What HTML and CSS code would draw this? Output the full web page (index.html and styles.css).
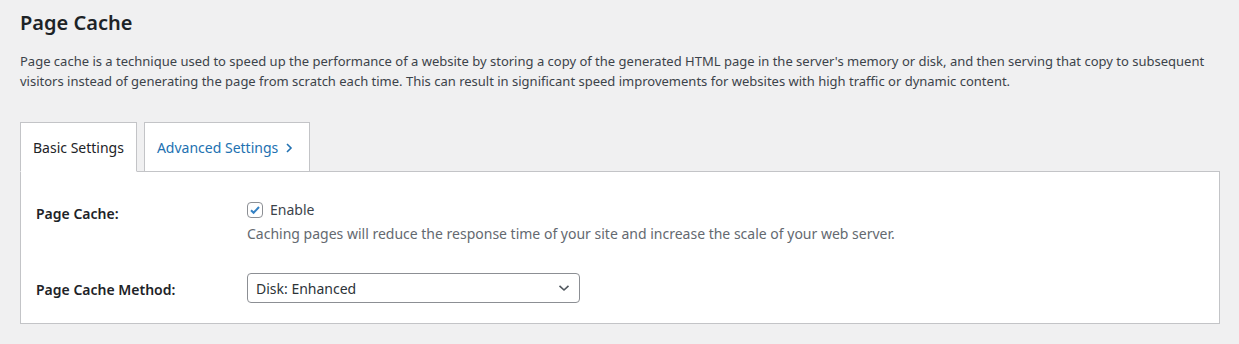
FILE: index.html
```html
<!DOCTYPE html>
<html lang="en">
<head>
  <meta charset="UTF-8">
  <title>Page Cache</title>
  <link rel="stylesheet" href="styles.css">
</head>
<body>
  <div class="wrap">
    <h1>Page Cache</h1>
    <p class="intro">Page cache is a technique used to speed up the performance of a website by storing a copy of the generated HTML page in the server's memory or disk, and then serving that copy to subsequent visitors instead of generating the page from scratch each time. This can result in significant speed improvements for websites with high traffic or dynamic content.</p>

    <div class="tabs">
      <a class="tab active" href="#">Basic Settings</a>
      <a class="tab" href="#">Advanced Settings
        <svg class="chev" width="8" height="12" viewBox="0 0 8 12"><path d="M2 2l4 4-4 4" fill="none" stroke="currentColor" stroke-width="1.6"/></svg>
      </a>
    </div>

    <div class="card">
      <div class="row">
        <div class="label">Page Cache:</div>
        <div class="field">
          <label class="check">
            <span class="box">
              <svg width="14" height="14" viewBox="0 0 14 14"><path d="M3 7.2l2.6 2.6L11 4" fill="none" stroke="#3582c4" stroke-width="2"/></svg>
            </span>
            Enable
          </label>
          <p class="desc">Caching pages will reduce the response time of your site and increase the scale of your web server.</p>
        </div>
      </div>
      <div class="row">
        <div class="label">Page Cache Method:</div>
        <div class="field">
          <div class="select">
            <span>Disk: Enhanced</span>
            <svg width="12" height="8" viewBox="0 0 12 8"><path d="M1.5 1.8l4.5 4.2 4.5-4.2" fill="none" stroke="#50575e" stroke-width="1.6"/></svg>
          </div>
        </div>
      </div>
    </div>
  </div>
</body>
</html>
```

FILE: styles.css
```css
* { margin: 0; padding: 0; box-sizing: border-box; }
body {
  font-family: 'Noto Sans', sans-serif;
  background-color: #f0f0f1;
  color: #3c434a;
  font-size: 13px;
}
.wrap {
  padding: 0 19px 0 20px;
}
h1 {
  font-size: 20px;
  font-weight: 600;
  color: #1d2327;
  line-height: 1.3;
  padding-top: 10px;
}
.intro {
  margin-top: 16px;
  line-height: 19.5px;
}
.tabs {
  display: flex;
  gap: 7px;
  margin-top: 31px;
  margin-bottom: -1px;
}
.tab {
  display: flex;
  align-items: center;
  gap: 7px;
  height: 50px;
  padding: 0 12px;
  background: #fff;
  border: 1px solid #c3c4c7;
  font-size: 14px;
  color: #2271b1;
  text-decoration: none;
  position: relative;
  z-index: 1;
}
.tab.active {
  color: #1d2327;
  border-bottom-color: #fff;
}
.tab:not(.active) {
  padding-right: 16px;
  border-bottom: none;
  height: 49px;
}
.chev {
  margin-top: 1px;
}
.card {
  background: #fff;
  border: 1px solid #c3c4c7;
  padding: 8px 15px 20px;
}
.row {
  display: flex;
}
.label {
  width: 211px;
  flex-shrink: 0;
  font-size: 14px;
  font-weight: 600;
  color: #1d2327;
  padding: 25px 0 20px;
  line-height: 1.3;
}
.row + .row .label {
  padding: 17px 0 0;
}
.field {
  padding: 20px 0;
  font-size: 14px;
}
.row + .row .field {
  padding: 9px 0 0;
}
.check {
  display: flex;
  align-items: center;
  gap: 7px;
  color: #3c434a;
  line-height: 20px;
}
.box {
  width: 16px;
  height: 16px;
  border: 1px solid #8c8f94;
  border-radius: 4px;
  display: flex;
  align-items: center;
  justify-content: center;
}
.desc {
  color: #646970;
  margin-top: 4px;
  line-height: 20px;
}
.select {
  width: 333px;
  height: 30px;
  border: 1px solid #8c8f94;
  border-radius: 4px;
  display: flex;
  align-items: center;
  justify-content: space-between;
  padding: 0 9px 0 8px;
  color: #2c3338;
}
```
